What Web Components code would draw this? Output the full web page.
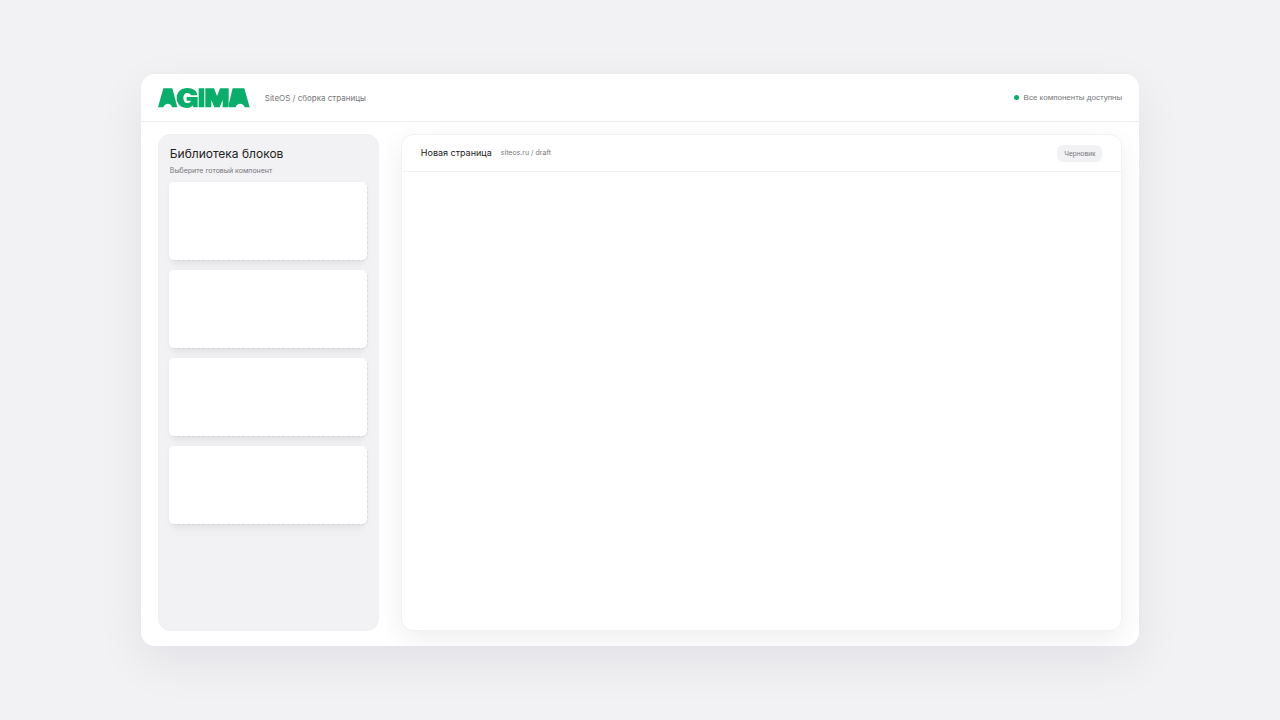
<!DOCTYPE html>
<html lang="ru">
<head>
<meta charset="utf-8">
<title>SiteOS</title>
<style>
body { margin: 0; font-family: Inter, "Liberation Sans", sans-serif; background: #f2f2f5; color: #222; }
</style>
</head>
<body>
<site-builder></site-builder>
<script>
const define = (name, html) => customElements.define(name, class extends HTMLElement {
  constructor() {
    super();
    const t = document.createElement('template');
    t.innerHTML = html;
    this.attachShadow({ mode: 'open' }).append(t.content.cloneNode(true));
  }
});

define('agima-logo', `
<style>
:host { display: block; width: 92px; height: 20px; flex: none; }
svg { display: block; width: 100%; height: 100%; }
</style>
<svg viewBox="0 0 276 60" role="img" aria-label="AGIMA" fill="#0bad6b">
  <path d="M0 58 16 1H43L58 58H42C40 44 20 44 16 58Z"/>
  <path fill-rule="evenodd" d="M88 0C106 0 117 9 118 22H99C97 17 93 15 88 15C80 15 76 21 76 30C76 39 81 45 88 45C94 45 98 42 99 38H86V27H119V58H106L105 52C101 57 95 60 87 60C69 60 56 48 56 30C56 12 69 0 88 0Z"/>
  <path d="M122 1H139V58H122Z"/>
  <path d="M142 1H168L177 24 186 1H212V58H194V36L185 58H169L160 36V58H142Z"/>
  <path d="M213 58V46L224 1H259L275 58H260C257 44 236 44 233 58Z"/>
</svg>`);

define('app-header', `
<style>
:host { display: flex; align-items: center; height: 47px; padding: 0 17px; border-bottom: 1px solid #f0f0f2; }
.path { margin-left: 15px; font-size: 8px; line-height: 12px; color: #77777b; }
.status { margin-left: auto; display: flex; align-items: center; gap: 5px; font: 8px/12px "Liberation Sans", Arial, sans-serif; color: #77777b; }
.status::before { content: ""; width: 5px; height: 5px; border-radius: 50%; background: #0bad6b; }
</style>
<agima-logo></agima-logo>
<div class="path"><slot name="path"></slot></div>
<div class="status"><slot name="status"></slot></div>`);

define('block-card', `
<style>
:host { display: block; height: 77px; border: 1px dashed #e2e2e5; border-radius: 6px; }
div { height: 100%; position: relative; }
div::before { content: ""; position: absolute; inset: -1px 0 0 -1px; background: #fff; border-radius: 5px; box-shadow: 0 12px 8px -4px rgba(20,20,30,.03), 0 2px 6px rgba(20,20,30,.04); }
</style>
<div><slot></slot></div>`);

define('block-library', `
<style>
:host { display: block; box-sizing: border-box; background: #f2f2f5; border: 1px solid #f0f0f2; border-radius: 12px; padding: 11px 10px; }
h2 { margin: 0; font-weight: 400; font-size: 12px; line-height: 16px; color: #222; }
p { margin: 3px 0 5px; font-size: 7px; line-height: 12px; color: #77777b; }
h2, p { padding-left: 1px; }
.list { display: grid; gap: 9px; }
</style>
<h2>Библиотека блоков</h2>
<p>Выберите готовый компонент</p>
<div class="list"><slot></slot></div>`);

define('page-canvas', `
<style>
:host { display: block; box-sizing: border-box; background: #fff; border: 1px solid #f2f2f3; border-radius: 12px; box-shadow: 0 8px 28px rgba(20,20,30,.07); }
header { display: flex; align-items: center; height: 36px; padding: 0 19px; border-bottom: 1px solid #f0f0f2; }
h1 { margin: 0; font-weight: 400; font-size: 9px; line-height: 14px; color: #222; }
.url { margin-left: 9px; font-size: 7px; line-height: 12px; color: #77777b; }
.badge { margin-left: auto; padding: 2px 7px; border-radius: 6px; background: #f2f2f5; font: 7px/13px "Liberation Sans", Arial, sans-serif; color: #77777b; }
</style>
<header><h1>Новая страница</h1><span class="url">siteos.ru / draft</span><span class="badge">Черновик</span></header>
<slot></slot>`);

define('site-builder', `
<style>
:host { display: grid; box-sizing: border-box; min-height: 100vh; padding: 74px 11%; }
main { display: flex; flex-direction: column; background: #fff; border-radius: 14px; overflow: hidden; }
.shell { display: grid; border-radius: 14px; box-shadow: 0 16px 48px rgba(20,20,30,.07); }
.work { flex: 1; display: grid; grid-template-columns: 221px 1fr; gap: 22px; padding: 12px 17px 15px; }
</style>
<div class="shell"><main>
<app-header><span slot="path">SiteOS / сборка страницы</span><span slot="status">Все компоненты доступны</span></app-header>
<div class="work">
<block-library><block-card></block-card><block-card></block-card><block-card></block-card><block-card></block-card></block-library>
<page-canvas></page-canvas>
</div>
</main></div>`);
</script>
</body>
</html>
